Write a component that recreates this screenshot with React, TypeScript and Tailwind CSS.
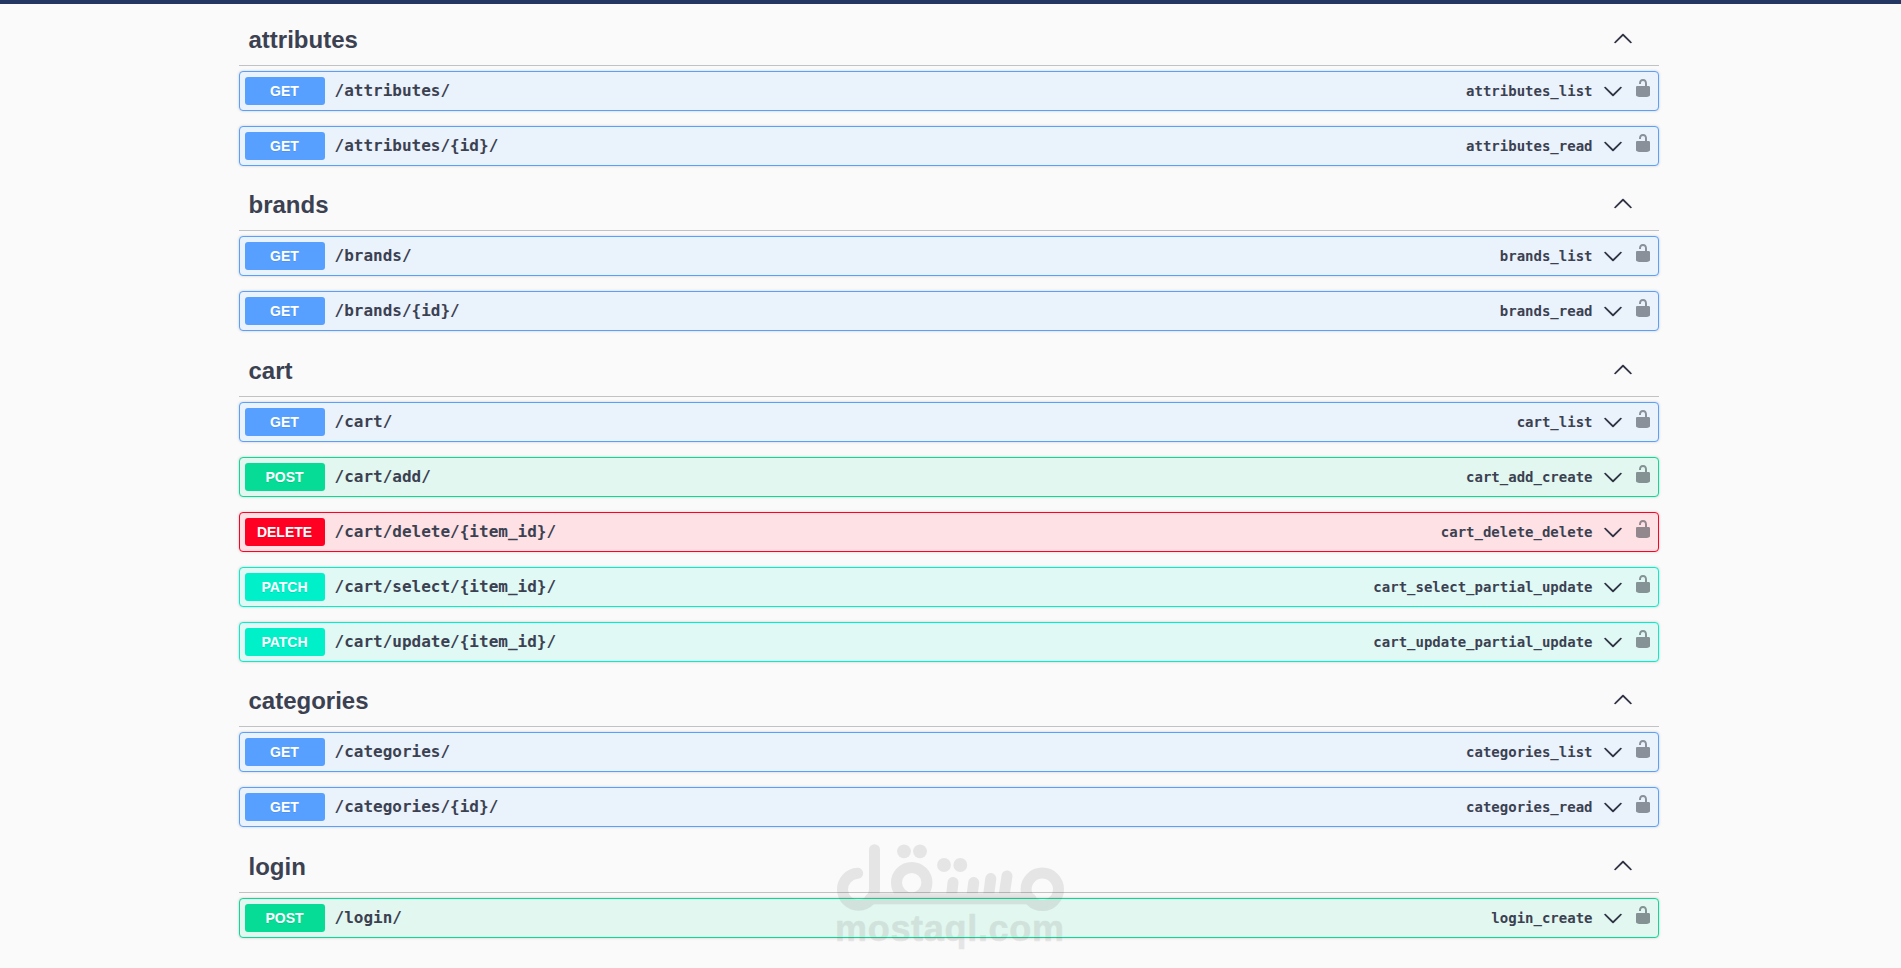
import clsx from "clsx";

type Method = "GET" | "POST" | "DELETE" | "PATCH";

interface Operation {
  method: Method;
  path: string;
  id: string;
}

const sections: { tag: string; operations: Operation[] }[] = [
  {
    tag: "attributes",
    operations: [
      { method: "GET", path: "/attributes/", id: "attributes_list" },
      { method: "GET", path: "/attributes/{id}/", id: "attributes_read" },
    ],
  },
  {
    tag: "brands",
    operations: [
      { method: "GET", path: "/brands/", id: "brands_list" },
      { method: "GET", path: "/brands/{id}/", id: "brands_read" },
    ],
  },
  {
    tag: "cart",
    operations: [
      { method: "GET", path: "/cart/", id: "cart_list" },
      { method: "POST", path: "/cart/add/", id: "cart_add_create" },
      { method: "DELETE", path: "/cart/delete/{item_id}/", id: "cart_delete_delete" },
      { method: "PATCH", path: "/cart/select/{item_id}/", id: "cart_select_partial_update" },
      { method: "PATCH", path: "/cart/update/{item_id}/", id: "cart_update_partial_update" },
    ],
  },
  {
    tag: "categories",
    operations: [
      { method: "GET", path: "/categories/", id: "categories_list" },
      { method: "GET", path: "/categories/{id}/", id: "categories_read" },
    ],
  },
  {
    tag: "login",
    operations: [{ method: "POST", path: "/login/", id: "login_create" }],
  },
];

const rowCls: Record<Method, string> = {
  GET: "border-[#57a0ff] bg-[#eaf2fc]",
  POST: "border-[#07dc97] bg-[#e2f7ef]",
  DELETE: "border-[#ff0022] bg-[#fee1e4]",
  PATCH: "border-[#00f0ca] bg-[#e1f9f5]",
};

const badgeCls: Record<Method, string> = {
  GET: "bg-[#57a0ff]",
  POST: "bg-[#07dc97]",
  DELETE: "bg-[#ff0022]",
  PATCH: "bg-[#00f0ca]",
};

function Arrow({ up }: { up?: boolean }) {
  return (
    <svg viewBox="0 0 20 20" className={clsx("h-5 w-5 fill-[#25293a] stroke-[#25293a] stroke-[0.3]", up && "mb-0.5 rotate-180")}>
      <path d="M17.418 6.109c.272-.268.709-.268.979 0s.271.701 0 .969l-7.908 7.83c-.27.268-.707.268-.979 0l-7.908-7.83c-.27-.268-.27-.701 0-.969s.709-.268.979 0L10 13.25l7.418-7.141z" />
    </svg>
  );
}

function Unlocked() {
  return (
    <svg viewBox="0 0 20 20" className="h-5 w-5 fill-[#2b303b] opacity-50">
      <path d="M15.8 8H14V5.6C14 2.703 12.665 1 10 1 7.334 1 6 2.703 6 5.6V6h2v-.801C8 3.754 8.797 3 10 3c1.203 0 2 .754 2 2.199V8H4c-.553 0-1 .646-1 1.199V17c0 .549.428 1.139.951 1.307l1.197.387C5.672 18.861 6.55 19 7.1 19h5.8c.549 0 1.428-.139 1.951-.307l1.196-.387c.524-.167.953-.757.953-1.306V9.199C17 8.646 16.352 8 15.8 8z" />
    </svg>
  );
}

function OperationRow({ method, path, id }: Operation) {
  return (
    <div className={clsx("mb-[15px] flex h-10 items-center rounded border p-[5px] shadow-[0_0_3px_rgba(0,0,0,0.19)]", rowCls[method])}>
      <span
        className={clsx(
          "w-20 rounded-[3px] text-center text-sm leading-7 font-bold text-white [text-shadow:0_1px_0_rgba(0,0,0,0.1)]",
          badgeCls[method]
        )}
      >
        {method}
      </span>
      <span className="flex-1 px-2.5 font-['DejaVu_Sans_Mono',monospace] text-base leading-5 font-bold">{path}</span>
      <span className="pr-2.5 font-['DejaVu_Sans_Mono',monospace] text-sm font-bold">{id}</span>
      <Arrow />
      <span className="mb-1.5 ml-2.5">
        <Unlocked />
      </span>
    </div>
  );
}

function Watermark() {
  return (
    <svg viewBox="0 0 240 110" className="pointer-events-none absolute top-[839.5px] left-[829.5px] h-[110px] w-[240px] opacity-[0.13]">
      <g fill="none" stroke="#5f5f5f" strokeWidth="11" strokeLinecap="round">
        <path d="M27.700 33.300A16 16 0 1 0 44.500 49.300V9.700" />
        <path d="M40 58.800H201" />
        <circle cx="81.700" cy="42.700" r="15.200" />
        <circle cx="212.300" cy="49.300" r="16.200" />
        <path d="M123 42.500L121.500 56M143.700 42.500L142 56M160.800 38.500L158.500 56M177 36L174 56" />
      </g>
      <g fill="#5f5f5f">
        <circle cx="74" cy="11.300" r="6.900" />
        <circle cx="90" cy="11.300" r="6.900" />
        <circle cx="114" cy="25" r="6.900" />
        <circle cx="130.300" cy="25" r="6.900" />
        <text
          x="5"
          y="101"
          textLength="229"
          stroke="#5f5f5f"
          strokeWidth="0.600"
          strokeLinejoin="round"
          className="font-['Liberation_Sans',sans-serif] text-[36px] font-bold"
        >
          mostaql.com
        </text>
      </g>
    </svg>
  );
}

export default function App() {
  return (
    <div className="relative h-[968px] overflow-hidden bg-[#fafafa] font-['Liberation_Sans',Arial,sans-serif] text-[#3b4151]">
      <div className="h-1 bg-[#243763]" />
      <main className="ml-[238.5px] w-[1420px] pt-[11px]">
        {sections.map(({ tag, operations }) => (
          <section key={tag}>
            <h3 className="mb-[5px] flex h-[50.5px] items-center border-b border-[#3b4151]/30 pr-[26px] pl-2.5 text-2xl font-bold">
              <span className="flex-1">{tag}</span>
              <Arrow up />
            </h3>
            {operations.map((op) => (
              <OperationRow key={op.id} {...op} />
            ))}
          </section>
        ))}
      </main>
      <Watermark />
    </div>
  );
}
